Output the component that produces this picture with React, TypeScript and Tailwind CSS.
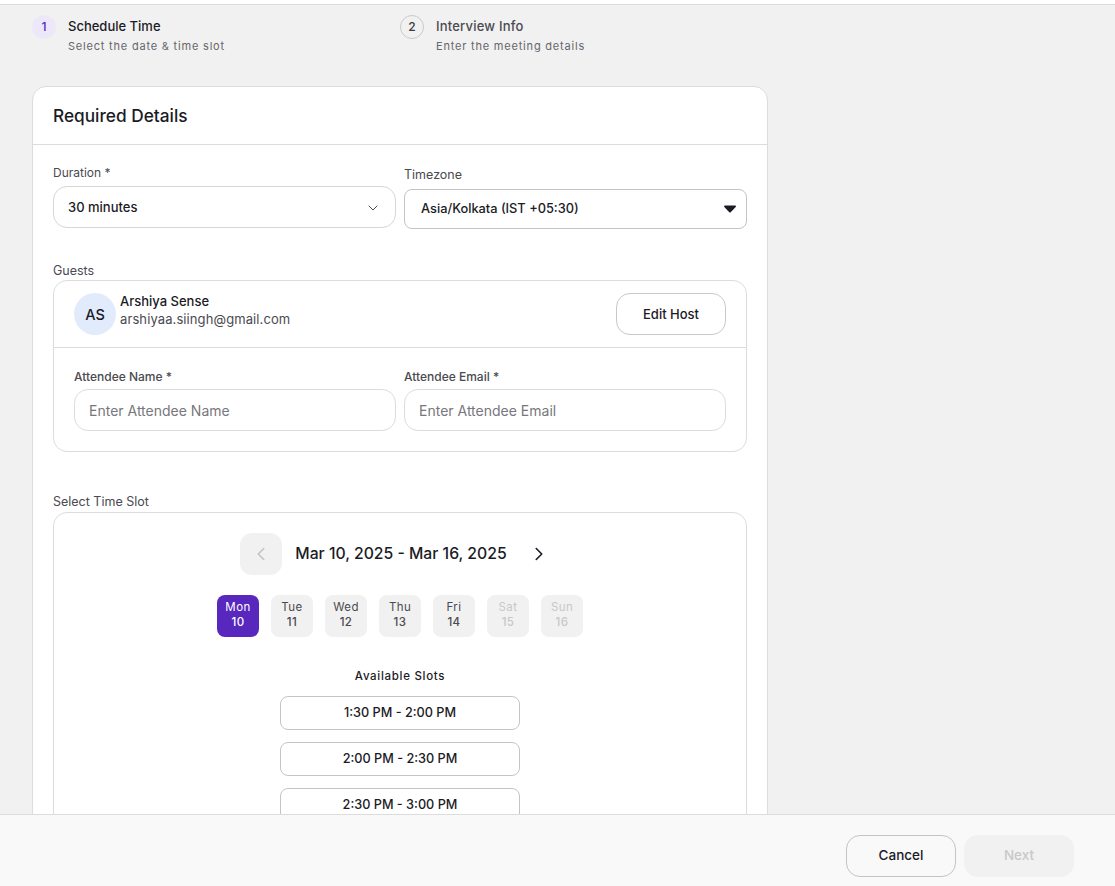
import { ChevronDown, ChevronLeft, ChevronRight } from "lucide-react";

const days = [
  { name: "Mon", date: 10, state: "active" },
  { name: "Tue", date: 11, state: "open" },
  { name: "Wed", date: 12, state: "open" },
  { name: "Thu", date: 13, state: "open" },
  { name: "Fri", date: 14, state: "open" },
  { name: "Sat", date: 15, state: "off" },
  { name: "Sun", date: 16, state: "off" },
];

const slots = ["1:30 PM - 2:00 PM", "2:00 PM - 2:30 PM", "2:30 PM - 3:00 PM"];

const Step = ({ num, title, sub, active }: { num: number; title: string; sub: string; active?: boolean }) => (
  <div className="flex w-[368px] gap-3">
    <div
      className={
        active
          ? "flex h-6 w-6 items-center justify-center rounded-full bg-[#ece8fa] text-xs font-medium text-[#5827bd]"
          : "flex h-6 w-6 items-center justify-center rounded-full border border-[#c9c9c9] text-xs font-medium text-[#3c3c42]"
      }
    >
      {num}
    </div>
    <div className="pt-[1px]">
      <div className={active ? "text-[13px] leading-5 font-medium text-[#1b1b26]" : "text-[13px] leading-5 font-medium tracking-[0.2px] text-[#4a4a50]"}>
        {title}
      </div>
      <div className="mt-[2px] text-[11px] leading-4 tracking-[0.8px] text-[#66666c]">{sub}</div>
    </div>
  </div>
);

const Label = ({ children }: { children: string }) => (
  <div className="pt-[1px] text-[12.5px] leading-4 text-[#4a4a50]">{children}</div>
);

const App = () => {
  return (
    <div className="flex h-[886px] flex-col overflow-hidden bg-[#f1f1f1] font-['Inter',sans-serif] text-[#1b1b26]">
      <div className="h-[5px] shrink-0 border-b border-[#dcdcdc] bg-white" />

      <main className="min-h-0 flex-1 overflow-hidden px-8">
        <div className="flex pt-[10px]">
          <Step num={1} title="Schedule Time" sub="Select the date & time slot" active />
          <Step num={2} title="Interview Info" sub="Enter the meeting details" />
        </div>

        <section className="mt-[32px] w-[736px] rounded-t-[14px] border border-[#dcdcdc] bg-white">
          <h2 className="flex h-[58px] items-center border-b border-[#dcdcdc] px-5 pt-[1px] text-[17.25px] font-medium">Required Details</h2>

          <div className="px-5 pt-5">
            <div className="flex gap-2">
              <div className="w-[343px]">
                <div className="text-[12px] leading-4 text-[#4a4a50]">Duration *</div>
                <div className="mt-[5px] flex h-[42px] items-center justify-between rounded-[14px] border border-[#d6d6d6] px-[14px] pt-[2px] text-[13px] font-medium">
                  30 minutes
                  <ChevronDown size={16} strokeWidth={1.5} className="text-[#4a4a50]" />
                </div>
              </div>
              <div className="w-[343px]">
                <div className="pt-[2px] text-[12.5px] leading-4 text-[#4a4a50]">Timezone</div>
                <div className="mt-[6px] flex h-10 items-center justify-between rounded-[8px] border border-[#c4c4c4] pr-[10px] pl-4 text-[12.800px] font-medium">
                  Asia/Kolkata (IST +05:30)
                  <svg width="12" height="8" viewBox="0 0 12 8" fill="#1b1b26">
                    <path d="M1 .5h10c.8 0 1.2.9.7 1.500L6.7 7.2c-.4.4-1 .4-1.400 0L.3 2C-.2 1.400.2.500 1 .5z" />
                  </svg>
                </div>
              </div>
            </div>

            <div className="mt-[33px]">
              <Label>Guests</Label>
              <div className="mt-[1px] rounded-[14px] border border-[#dcdcdc]">
                <div className="flex h-[67px] items-center justify-between border-b border-[#dcdcdc] px-5">
                  <div className="flex items-center gap-[4px]">
                    <div className="flex h-[42px] w-[42px] items-center justify-center rounded-full bg-[#e2ebfc] pt-[2px] text-[14.500px] font-medium">AS</div>
                    <div className="-mt-[8px]">
                      <div className="text-[13px] leading-[18px] font-medium">Arshiya Sense</div>
                      <div className="text-[13px] leading-[18px] tracking-[0.1px] text-[#4a4a50]">arshiyaa.siingh@gmail.com</div>
                    </div>
                  </div>
                  <button className="h-[42px] w-[110px] rounded-[14px] border border-[#c9c9c9] pt-[2px] text-[13px] font-medium">Edit Host</button>
                </div>
                <div className="flex gap-2 px-5 pt-5 pb-5">
                  <div className="flex-1">
                    <div className="pt-[1px] text-[12px] leading-4 font-medium text-[#4a4a50]">Attendee Name *</div>
                    <div className="mt-[4px] flex h-[42px] items-center rounded-[14px] border border-[#dcdcdc] px-[14px] text-[14px] text-[#77777c]">Enter Attendee Name</div>
                  </div>
                  <div className="flex-1">
                    <div className="pt-[1px] text-[12px] leading-4 font-medium text-[#4a4a50]">Attendee Email *</div>
                    <div className="mt-[4px] flex h-[42px] items-center rounded-[14px] border border-[#dcdcdc] px-[14px] text-[14px] text-[#77777c]">Enter Attendee Email</div>
                  </div>
                </div>
              </div>
            </div>

            <div className="mt-[41px]">
              <Label>Select Time Slot</Label>
              <div className="mt-[2px] rounded-t-[14px] border border-[#dcdcdc] pt-5 pb-5">
                <div className="flex items-center justify-center">
                  <button className="flex h-[42px] w-[42px] items-center justify-center rounded-[12px] bg-[#f1f1f1] text-[#c4c4c4]">
                    <ChevronLeft size={22} strokeWidth={1.75} />
                  </button>
                  <div className="mr-[11px] ml-[13px] w-[212px] text-center text-[15.750px] font-medium whitespace-nowrap">Mar 10, 2025 - Mar 16, 2025</div>
                  <button className="flex h-[42px] w-[42px] items-center justify-center">
                    <ChevronRight size={22} strokeWidth={1.75} />
                  </button>
                </div>

                <div className="mt-5 flex justify-center gap-3">
                  {days.map((d) => (
                    <div
                      key={d.name}
                      className={
                        d.state === "active"
                          ? "flex h-[42px] w-[42px] flex-col items-center justify-center rounded-[8px] bg-[#5827bd] pb-[3px] text-[11.500px] leading-[15px] tracking-[0.4px] text-white"
                          : d.state === "open"
                            ? "flex h-[42px] w-[42px] flex-col items-center justify-center rounded-[8px] bg-[#f1f1f1] pb-[3px] text-[11.500px] leading-[15px] tracking-[0.4px] text-[#4a4a50]"
                            : "flex h-[42px] w-[42px] flex-col items-center justify-center rounded-[8px] bg-[#f1f1f1] pb-[3px] text-[11.500px] leading-[15px] tracking-[0.4px] text-[#c8c8c8]"
                      }
                    >
                      <span>{d.name}</span>
                      <span className="font-medium">{d.date}</span>
                    </div>
                  ))}
                </div>

                <div className="mt-[31px] text-center text-[11.500px] leading-4 font-medium tracking-[0.7px]">Available Slots</div>
                <div className="mt-3 flex flex-col items-center gap-3">
                  {slots.map((s) => (
                    <button key={s} className="h-[34px] w-[240px] rounded-[8px] border border-[#c4c4c4] text-[12.700px] font-medium">
                      {s}
                    </button>
                  ))}
                </div>
              </div>
            </div>
          </div>
        </section>
      </main>

      <footer className="flex h-[72px] shrink-0 items-start justify-end gap-2 border-t border-[#dcdcdc] bg-[#f9f9f9] pt-5 pr-[41px]">
        <button className="h-[42px] w-[110px] rounded-[14px] border border-[#c4c4c4] pb-px text-[13.500px] font-medium">Cancel</button>
        <button className="h-[42px] w-[110px] rounded-[14px] bg-[#f1f1f1] pb-px text-[13.500px] font-medium text-[#c8c8c8]">Next</button>
      </footer>
    </div>
  );
};

export default App;
